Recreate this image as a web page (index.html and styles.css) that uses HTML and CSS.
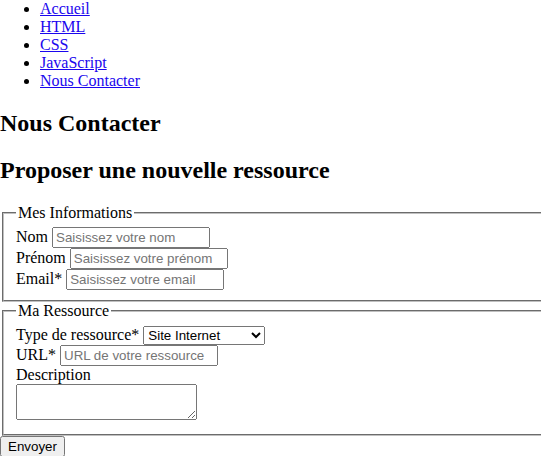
FILE: index.html
```html
<!DOCTYPE html>
<html lang="fr">
<head>
<meta charset="utf-8">
<title>Nous Contacter</title>
<link rel="stylesheet" href="styles.css">
</head>
<body>
<nav>
  <ul class="menu">
    <li><a href="#">Accueil</a></li>
    <li><a href="#">HTML</a></li>
    <li><a href="#">CSS</a></li>
    <li><a href="#">JavaScript</a></li>
    <li><a href="#">Nous Contacter</a></li>
  </ul>
</nav>
<h2 class="title">Nous Contacter</h2>
<h2 class="title">Proposer une nouvelle ressource</h2>
<form class="form">
  <fieldset class="group">
    <legend>Mes Informations</legend>
    <div class="row"><label for="nom">Nom</label> <input class="field" type="text" id="nom" placeholder="Saisissez votre nom"></div>
    <div class="row"><label for="prenom">Prénom</label> <input class="field" type="text" id="prenom" placeholder="Saisissez votre prénom"></div>
    <div class="row"><label for="email">Email*</label> <input class="field" type="email" id="email" placeholder="Saisissez votre email"></div>
  </fieldset>
  <fieldset class="group">
    <legend>Ma Ressource</legend>
    <div class="row"><label for="type">Type de ressource*</label> <select class="choice" id="type"><option>Site Internet</option><option>Livre</option><option>Vidéo</option></select></div>
    <div class="row"><label for="url">URL*</label> <input class="field" type="url" id="url" placeholder="URL de votre ressource"></div>
    <div class="row"><label for="desc">Description</label><br><textarea id="desc"></textarea></div>
  </fieldset>
  <button type="submit" class="submit">Envoyer</button>
</form>
</body>
</html>
```
FILE: styles.css
```css
html {
  overflow: hidden;
}
body {
  margin: 0;
  font-family: "Liberation Serif", serif;
  font-size: 16px;
  color: #000;
  background: #fff;
}
.menu {
  margin: 0;
  padding-left: 40px;
}
.menu a {
  color: #1a06ee;
}
.title {
  font-size: 24px;
  margin: 19.92px 0;
}
.group {
  margin: 0 2px;
  width: 600px;
  border: 2px groove #c0c0c0;
  padding: 0.35em 0.75em 0.625em;
}
.group legend {
  padding: 0 2px;
}
input, select, textarea, button {
  font-family: "Liberation Sans", Arial, sans-serif;
  font-size: 13.333px;
}
.field {
  box-sizing: border-box;
  width: 158px;
}
.choice {
  box-sizing: border-box;
  width: 122px;
}
```
